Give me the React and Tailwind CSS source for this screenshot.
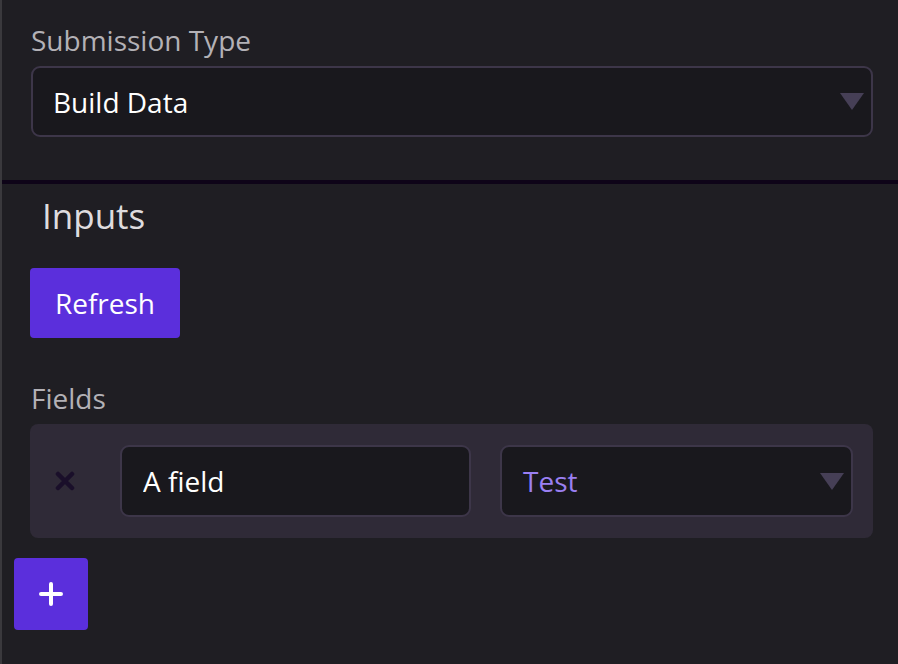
import { useState } from 'react'

const font = { fontFamily: '"Open Sans", "Noto Sans", sans-serif' }
const boxCls = "bg-[#19181d] border-2 border-[#3d3649] rounded-[9px] text-[28px] outline-none"

function Caret() {
  return (
    <svg width="24" height="17" viewBox="0 0 24 17" className="shrink-0">
      <polygon points="0,0 24,0 12,17" fill="#463f56" />
    </svg>
  )
}

export default function App() {
  const [name, setName] = useState('A field')

  return (
    <div className="min-h-[664px] bg-[#1f1e23] border-l-2 border-[#3a393d] text-white" style={font}>
      <div className="pl-[29px] pr-[25px] pt-[24px] pb-[43px]">
        <div className="text-[28px] leading-[32px] text-[#b3b1b6] mb-[10px]">Submission Type</div>
        <div className={`${boxCls} h-[71px] flex items-center justify-between pl-[20px] pr-[7px]`}>
          <span>Build Data</span>
          <Caret />
        </div>
      </div>

      <div className="h-[4px] bg-[#0e0418]" />

      <div className="pl-[28px] pr-[25px]">
        <h2 className="text-[35px] leading-[36px] text-[#dedcdf] pl-[12px] mt-[14px] mb-[34px]">Inputs</h2>
        <button className="w-[150px] h-[70px] bg-[#5b2fdc] rounded-[4px] text-[28px] text-white">Refresh</button>

        <div className="text-[28px] leading-[32px] text-[#b3b1b6] mt-[44px] mb-[10px] pl-[1px]">Fields</div>
        <div className="bg-[#2f2a37] rounded-[8px] h-[114px] flex items-center pl-[25px] pr-[20px]">
          <svg width="20" height="20" viewBox="0 0 20 20" className="shrink-0">
            <path d="M3 3 L17 17 M17 3 L3 17" stroke="#1a0f2a" strokeWidth="4.5" strokeLinecap="round" />
          </svg>
          <input
            value={name}
            onChange={(e) => setName(e.target.value)}
            className={`${boxCls} ml-[45px] w-[351px] h-[72px] px-[21px] text-white`}
            style={font}
          />
          <div className={`${boxCls} ml-[29px] flex-1 h-[72px] flex items-center justify-between pl-[21px] pr-[7px]`}>
            <span className="text-[#9a7ff2]">Test</span>
            <Caret />
          </div>
        </div>
      </div>

      <div className="pl-[12px] mt-[20px]">
        <button className="w-[74px] h-[72px] bg-[#5b2fdc] rounded-[4px] flex items-center justify-center">
          <svg width="24" height="24" viewBox="0 0 24 24">
            <path d="M12 2 V22 M2 12 H22" stroke="white" strokeWidth="4" strokeLinecap="round" />
          </svg>
        </button>
      </div>
    </div>
  )
}
